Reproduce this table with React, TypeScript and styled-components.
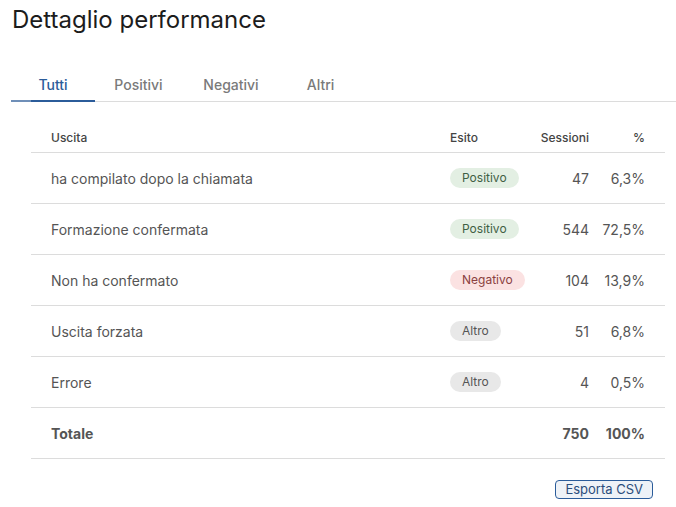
import React from "react";
import styled, { createGlobalStyle } from "styled-components";

const Global = createGlobalStyle`
  html, body { margin: 0; padding: 0; background: #ffffff; }
  body { font-family: Inter, "Noto Sans", "Liberation Sans", sans-serif; }
`;

const Page = styled.div`
  padding: 0 0 0 11px;
  width: 665px;
`;

const Title = styled.h1`
  margin: 0;
  padding: 4px 0 0 1px;
  font-size: 24px;
  line-height: 31px;
  font-weight: 400;
  color: #1c1c1c;
`;

const TabBar = styled.div`
  display: flex;
  margin-top: 34px;
  border-bottom: 1px solid #dcdcdc;
`;

const Tab = styled.div<{ $w: number; $active?: boolean }>`
  position: relative;
  width: ${(p) => p.$w}px;
  text-align: center;
  font-size: 14px;
  line-height: 17px;
  padding: 7px 0 8px;
  color: ${(p) => (p.$active ? "#2b5c9a" : "#7a7a7a")};
  font-weight: 500;
  ${(p) =>
    p.$active &&
    `
    &::after {
      content: "";
      position: absolute;
      left: 0;
      right: 0;
      bottom: -1px;
      height: 2px;
      background: linear-gradient(to right, #6f8fb8 0 20px, #2b5c9a 20px);
    }
  `}
`;

const Panel = styled.div`
  padding: 20px 11px 0 20px;
`;

const Table = styled.div`
  display: flex;
  flex-direction: column;
`;

const Row = styled.div<{ $head?: boolean; $bold?: boolean }>`
  display: grid;
  grid-template-columns: 1fr 74px 65px 56px;
  align-items: center;
  height: ${(p) => (p.$head ? 30 : 50)}px;
  padding: 0 20px;
  border-bottom: 1px solid #dcdcdc;
  font-size: ${(p) => (p.$head ? 12 : 14)}px;
  font-weight: ${(p) => (p.$head ? 500 : p.$bold ? 700 : 400)};
  color: ${(p) => (p.$head ? "#444" : "#555")};
`;

const Cell = styled.div<{ $right?: boolean }>`
  text-align: ${(p) => (p.$right ? "right" : "left")};
  white-space: nowrap;
`;

const Badge = styled.span<{ $kind: "pos" | "neg" | "alt" }>`
  display: inline-block;
  font-size: 12px;
  line-height: 20px;
  padding: 0 12px;
  border-radius: 10px;
  background: ${(p) =>
    p.$kind === "pos" ? "#e3efe3" : p.$kind === "neg" ? "#fbe2e2" : "#e8e8e8"};
  color: ${(p) =>
    p.$kind === "pos" ? "#3f6044" : p.$kind === "neg" ? "#8a4040" : "#555"};
`;

const Footer = styled.div`
  display: flex;
  justify-content: flex-end;
  padding: 21px 12px 0 0;
`;

const Button = styled.button`
  font-family: inherit;
  font-size: 13px;
  line-height: 15px;
  height: 19px;
  padding: 0 9px;
  border: 1px solid #2b5c9a;
  border-radius: 4px;
  background: #eef2f7;
  color: #2b4d7c;
  cursor: pointer;
`;

type Kind = "pos" | "neg" | "alt";
const rows: { name: string; kind: Kind; label: string; n: string; pct: string }[] = [
  { name: "ha compilato dopo la chiamata", kind: "pos", label: "Positivo", n: "47", pct: "6,3%" },
  { name: "Formazione confermata", kind: "pos", label: "Positivo", n: "544", pct: "72,5%" },
  { name: "Non ha confermato", kind: "neg", label: "Negativo", n: "104", pct: "13,9%" },
  { name: "Uscita forzata", kind: "alt", label: "Altro", n: "51", pct: "6,8%" },
  { name: "Errore", kind: "alt", label: "Altro", n: "4", pct: "0,5%" },
];

export default function App() {
  return (
    <>
      <Global />
      <Page>
        <Title>Dettaglio performance</Title>
        <TabBar>
          <Tab $w={84} $active>Tutti</Tab>
          <Tab $w={87}>Positivi</Tab>
          <Tab $w={98}>Negativi</Tab>
          <Tab $w={81}>Altri</Tab>
        </TabBar>
        <Panel>
          <Table>
            <Row $head>
              <Cell>Uscita</Cell>
              <Cell>Esito</Cell>
              <Cell $right>Sessioni</Cell>
              <Cell $right>%</Cell>
            </Row>
            {rows.map((r) => (
              <Row key={r.name}>
                <Cell>{r.name}</Cell>
                <Cell>
                  <Badge $kind={r.kind}>{r.label}</Badge>
                </Cell>
                <Cell $right>{r.n}</Cell>
                <Cell $right>{r.pct}</Cell>
              </Row>
            ))}
            <Row $bold>
              <Cell>Totale</Cell>
              <Cell />
              <Cell $right>750</Cell>
              <Cell $right>100%</Cell>
            </Row>
          </Table>
          <Footer>
            <Button>Esporta CSV</Button>
          </Footer>
        </Panel>
      </Page>
    </>
  );
}
